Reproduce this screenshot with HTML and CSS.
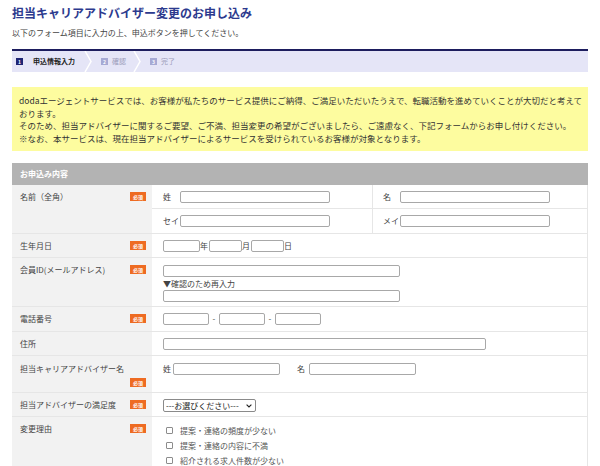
FILE: index.html
```html
<!DOCTYPE html>
<html lang="ja">
<head>
<meta charset="utf-8">
<title>担当キャリアアドバイザー変更のお申し込み</title>
<link rel="stylesheet" href="styles.css">
</head>
<body>
<div class="page">
  <h1 class="title">担当キャリアアドバイザー変更のお申し込み</h1>
  <p class="lead">以下のフォーム項目に入力の上、申込ボタンを押してください。</p>

  <ol class="steps">
    <li class="step step--active"><span class="step-num">1</span>申込情報入力</li>
    <li class="step-sep"><svg width="8" height="21" viewBox="0 0 8 21"><polyline points="1,0 7,10.5 1,21" fill="none" stroke="#ffffff" stroke-width="1.5"/></svg></li>
    <li class="step"><span class="step-num">2</span>確認</li>
    <li class="step-sep"><svg width="8" height="21" viewBox="0 0 8 21"><polyline points="1,0 7,10.5 1,21" fill="none" stroke="#ffffff" stroke-width="1.5"/></svg></li>
    <li class="step"><span class="step-num">3</span>完了</li>
  </ol>

  <div class="notice">
    <p>dodaエージェントサービスでは、お客様が私たちのサービス提供にご納得、ご満足いただいたうえで、転職活動を進めていくことが大切だと考えております。</p>
    <p>そのため、担当アドバイザーに関するご要望、ご不満、担当変更の希望がございましたら、ご遠慮なく、下記フォームからお申し付けください。</p>
    <p>※なお、本サービスは、現在担当アドバイザーによるサービスを受けられているお客様が対象となります。</p>
  </div>

  <section class="form">
    <div class="form-head">お申込み内容</div>

    <div class="row">
      <div class="label-cell"><span class="label-text">名前（全角）</span><span class="req">必須</span></div>
      <div class="name-grid">
        <div class="name-cell name-cell--top"><span class="pre">姓</span><input class="input input--name" type="text"></div>
        <div class="name-cell name-cell--top name-cell--right"><span class="pre">名</span><input class="input input--name" type="text"></div>
        <div class="name-cell"><span class="pre">セイ</span><input class="input input--name" type="text"></div>
        <div class="name-cell name-cell--right"><span class="pre">メイ</span><input class="input input--name" type="text"></div>
      </div>
    </div>

    <div class="row">
      <div class="label-cell"><span class="label-text">生年月日</span><span class="req">必須</span></div>
      <div class="field-cell field-cell--birth">
        <input class="input input--year" type="text"><span class="unit">年</span><input class="input input--md" type="text"><span class="unit">月</span><input class="input input--md" type="text"><span class="unit">日</span>
      </div>
    </div>

    <div class="row">
      <div class="label-cell"><span class="label-text">会員ID(メールアドレス)</span><span class="req">必須</span></div>
      <div class="field-cell field-cell--mail">
        <input class="input input--mail" type="text">
        <div class="note">▼確認のため再入力</div>
        <input class="input input--mail" type="text">
      </div>
    </div>

    <div class="row">
      <div class="label-cell"><span class="label-text">電話番号</span><span class="req">必須</span></div>
      <div class="field-cell field-cell--tel">
        <input class="input input--tel" type="text"><span class="dash">-</span><input class="input input--tel" type="text"><span class="dash">-</span><input class="input input--tel" type="text">
      </div>
    </div>

    <div class="row">
      <div class="label-cell"><span class="label-text">住所</span></div>
      <div class="field-cell field-cell--addr">
        <input class="input input--addr" type="text">
      </div>
    </div>

    <div class="row">
      <div class="label-cell label-cell--stack"><span class="label-text">担当キャリアアドバイザー名</span><span class="req">必須</span></div>
      <div class="field-cell field-cell--advisor">
        <span class="pre-sm">姓</span><input class="input input--adv" type="text"><span class="pre-sm pre-sm--gap">名</span><input class="input input--adv" type="text">
      </div>
    </div>

    <div class="row">
      <div class="label-cell"><span class="label-text">担当アドバイザーの満足度</span><span class="req">必須</span></div>
      <div class="field-cell field-cell--select">
        <span class="select-wrap">
          <select class="select"><option>---お選びください---</option></select>
          <svg class="select-arrow" width="6" height="4" viewBox="0 0 6 4"><polyline points="0.6,0.6 3,3 5.4,0.6" fill="none" stroke="#222222" stroke-width="1.1"/></svg>
        </span>
      </div>
    </div>

    <div class="row row--last">
      <div class="label-cell"><span class="label-text">変更理由</span><span class="req">必須</span></div>
      <ul class="checks">
        <li class="check"><input type="checkbox" class="box">提案・連絡の頻度が少ない</li>
        <li class="check"><input type="checkbox" class="box">提案・連絡の内容に不満</li>
        <li class="check"><input type="checkbox" class="box">紹介される求人件数が少ない</li>
      </ul>
    </div>
  </section>
</div>
</body>
</html>
```

FILE: styles.css
```css
* {
  box-sizing: border-box;
}

html, body {
  margin: 0;
  padding: 0;
  background: #ffffff;
}

body {
  font-family: "Noto Sans CJK JP", "Noto Sans", sans-serif;
  color: #333333;
  overflow: hidden;
}

.page {
  padding: 0 12px;
  width: 600px;
}

.title {
  margin: 5px 0 0;
  font-size: 12px;
  line-height: 16px;
  font-weight: bold;
  color: #2c3a8e;
}

.lead {
  margin: 6px 0 0;
  font-size: 8px;
  line-height: 12px;
  color: #444444;
}

/* steps */
.steps {
  list-style: none;
  margin: 10px 0 0;
  padding: 0 0 0 4px;
  height: 23px;
  border-top: 2px solid #1d1d5e;
  background: #e5e5f7;
  display: flex;
  align-items: center;
}

.step {
  display: flex;
  align-items: center;
  font-size: 7px;
  line-height: 21px;
  color: #9c9cba;
}

.step--active {
  color: #222222;
  font-weight: bold;
}

.step-num {
  display: inline-flex;
  align-items: center;
  justify-content: center;
  width: 7px;
  height: 7px;
  margin-right: 4px;
  background: #a6a9d4;
  color: #ffffff;
  font-size: 5px;
  line-height: 7px;
  font-weight: bold;
}

.step--active .step-num {
  background: #1e2474;
  margin-right: 10px;
}

.step--active + .step-sep {
  margin-left: 9px;
}

.step-sep {
  display: flex;
  align-items: center;
  height: 21px;
  margin: 0 9px 0 7px;
}

.step-sep svg {
  display: block;
}

/* notice */
.notice {
  margin-top: 15px;
  background: #fdfc9f;
  padding: 7px 3px 7px 7px;
  font-size: 8.5px;
  line-height: 12.5px;
  color: #333333;
}

.notice p {
  margin: 0;
}

/* form */
.form {
  margin-top: 12px;
}

.form-head {
  height: 22px;
  line-height: 22px;
  padding-left: 8px;
  background: #b3b3b3;
  color: #ffffff;
  font-size: 8px;
  font-weight: bold;
}

.row {
  display: grid;
  grid-template-columns: 140px 1fr;
  border-bottom: 1px solid #e6e6e6;
  border-right: 1px solid #e6e6e6;
  font-size: 8px;
  color: #444444;
}

.row--last {
  border-bottom: none;
}

.label-cell {
  background: #f2f2f2;
  padding: 6px 6px 0 8px;
  display: flex;
  align-items: flex-start;
  justify-content: space-between;
  line-height: 12px;
}

.label-cell--stack {
  flex-direction: column;
  align-items: stretch;
  padding-top: 7px;
  padding-bottom: 5px;
}

.label-cell--stack .req {
  align-self: flex-end;
  margin-top: 3px;
}

.req {
  flex: none;
  width: 16px;
  height: 9px;
  margin-top: 1px;
  background: #ee6b22;
  color: #ffffff;
  font-size: 5px;
  line-height: 9px;
  text-align: center;
  font-weight: bold;
}

.input {
  display: inline-block;
  height: 12px;
  padding: 0;
  margin: 0;
  border: 1px solid #a8a8a8;
  border-radius: 2px;
  background: #ffffff;
  vertical-align: middle;
  font-size: 8px;
}

/* name */
.name-grid {
  display: grid;
  grid-template-columns: 220px 1fr;
}

.name-cell {
  height: 24px;
  padding: 0 0 0 11px;
  display: flex;
  align-items: center;
  line-height: 12px;
}

.name-cell--top {
  border-bottom: 1px solid #e6e6e6;
  height: 24px;
  padding-top: 1px;
}

.name-cell--right {
  border-left: 1px solid #e6e6e6;
  padding-left: 10px;
}

.pre {
  display: inline-block;
  width: 17px;
  flex: none;
}

.input--name {
  width: 150px;
}

/* generic field cell */
.field-cell {
  padding: 6px 11px 5px;
  line-height: 12px;
  display: flex;
  align-items: center;
}

.field-cell--birth .unit {
  width: 9px;
}

.input--year {
  width: 37px;
}

.input--md {
  width: 33px;
}

.field-cell--mail {
  flex-direction: column;
  align-items: flex-start;
  padding-top: 7px;
  padding-bottom: 4px;
}

.input--mail {
  width: 237px;
}

.note {
  line-height: 13px;
  color: #444444;
}

.field-cell--tel {
  padding-bottom: 6px;
}

.dash {
  width: 10px;
  text-align: center;
}

.input--tel {
  width: 46px;
}

.input--addr {
  width: 323px;
}

.field-cell--advisor {
  align-items: flex-start;
  padding-top: 7px;
}

.pre-sm {
  margin-right: 2px;
}

.pre-sm--gap {
  margin-left: 17px;
  margin-right: 4px;
}

.input--adv {
  width: 107px;
}

.field-cell--select {
  padding-bottom: 4px;
}

.select-wrap {
  position: relative;
  display: inline-block;
  height: 13px;
}

.select {
  appearance: none;
  -webkit-appearance: none;
  display: block;
  width: 93px;
  height: 13px;
  padding: 0 0 0 2px;
  margin: 0;
  font-family: "Noto Sans CJK JP", sans-serif;
  font-size: 8px;
  line-height: 11px;
  color: #222222;
  border: 1px solid #8a8a8a;
  border-radius: 2px;
  background: #ffffff;
}

.select-arrow {
  position: absolute;
  right: 4px;
  top: 5px;
}

/* checks */
.checks {
  list-style: none;
  margin: 0;
  padding: 6px 11px 10px 14px;
}

.check {
  display: flex;
  align-items: center;
  height: 15px;
  line-height: 15px;
  color: #555555;
}

.box {
  appearance: none;
  -webkit-appearance: none;
  width: 7px;
  height: 7px;
  margin: 0 7px 0 0;
  border: 1px solid #8c8c8c;
  border-radius: 1px;
  background: #ffffff;
  flex: none;
}
```
